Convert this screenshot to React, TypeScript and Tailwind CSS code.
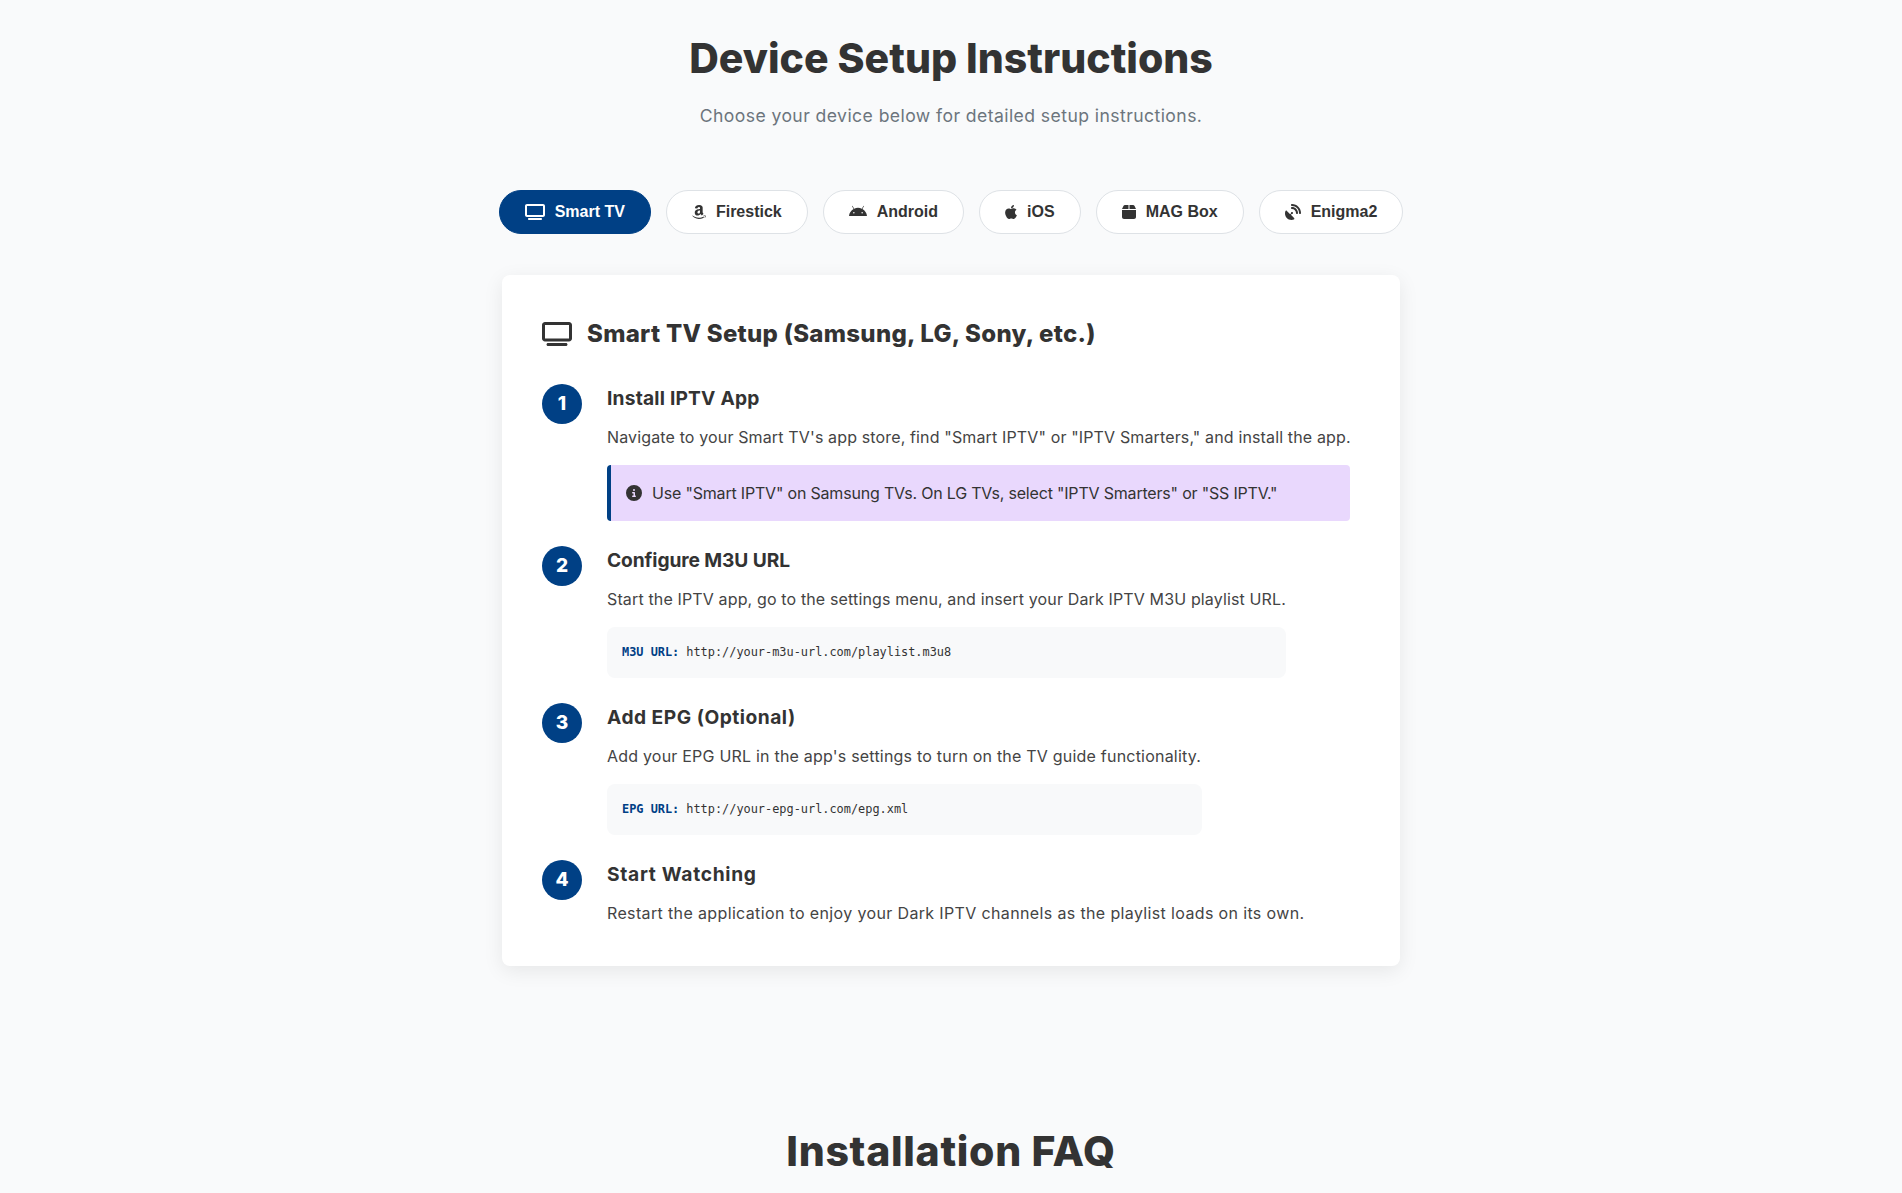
import { FaTv, FaAmazon, FaAndroid, FaApple, FaBox, FaSatelliteDish, FaCircleInfo } from "react-icons/fa6";
import type { ReactNode } from "react";

const tabs = [
  { label: "Smart TV", icon: <FaTv className="w-5 h-4" />, active: true },
  { label: "Firestick", icon: <FaAmazon className="w-[14px] h-4" /> },
  { label: "Android", icon: <FaAndroid className="w-[18px] h-4" /> },
  { label: "iOS", icon: <FaApple className="w-3 h-4" /> },
  { label: "MAG Box", icon: <FaBox className="w-[14px] h-4" /> },
  { label: "Enigma2", icon: <FaSatelliteDish className="w-4 h-4" /> },
];

function Step({ n, title, text, children, className, titleClass, textClass }: { n: number; title: string; text: string; children?: ReactNode; className?: string; titleClass: string; textClass: string }) {
  return (
    <div className={`flex gap-[25px] ${className ?? ""}`}>
      <div className="w-10 h-10 shrink-0 rounded-full bg-[#004085] text-white flex items-center justify-center text-[19px] font-extrabold">{n}</div>
      <div className="min-w-0 pt-[1px]">
        <h3 className={`text-[19.2px] leading-[26px] font-bold text-[#333] ${titleClass}`}>{title}</h3>
        <p className={`mt-[13px] text-[16px] leading-[26px] text-[#444] ${textClass}`}>{text}</p>
        {children}
      </div>
    </div>
  );
}

function Code({ label, url, width }: { label: string; url: string; width: string }) {
  return (
    <div className={`mt-[15px] h-[51px] ${width} rounded-lg bg-[#f8f9fa] px-[15px] flex items-center text-[11.9px] text-[#333] font-['DejaVu_Sans_Mono',monospace]`}>
      <span className="font-bold text-[#004085]">{label}</span>
      <span className="ml-[7px]">{url}</span>
    </div>
  );
}

export default function App() {
  return (
    <div className="h-[1193px] overflow-hidden bg-[#f9fafb] font-['Inter',sans-serif] text-[#333]">
      <h1 className="pt-[34px] text-center text-[41px] leading-[48px] font-extrabold text-[#333]">Device Setup Instructions</h1>
      <p className="mt-[20px] text-center text-[17.6px] leading-[28px] tracking-[0.42px] text-[#6c757d]">Choose your device below for detailed setup instructions.</p>

      <div className="mt-[60px] flex justify-center gap-[15px]">
        {tabs.map((t) => (
          <button
            key={t.label}
            className={`h-[44px] px-[25px] rounded-full flex items-center gap-[10px] text-[16px] font-bold font-['Liberation_Sans',sans-serif] border ${
              t.active ? "bg-[#004085] text-white border-[#004085]" : "bg-white text-[#333] border-[#dee2e6]"
            }`}
          >
            {t.icon}
            <span>{t.label}</span>
          </button>
        ))}
      </div>

      <div className="mt-[41px] mx-auto w-[898px] h-[691px] rounded-lg bg-white shadow-[0_5px_20px_rgba(0,0,0,0.08)] px-[40px] pt-[41px]">
        <h2 className="flex items-center gap-[15px] text-[24px] leading-[36px] font-extrabold tracking-[0.29px] text-[#333]">
          <FaTv className="w-[30px] h-6" />
          <span>Smart TV Setup (Samsung, LG, Sony, etc.)</span>
        </h2>
        <Step n={1} title="Install IPTV App" titleClass="tracking-[0.2px]" textClass="tracking-[0.14px]" text={`Navigate to your Smart TV's app store, find "Smart IPTV" or "IPTV Smarters," and install the app.`} className="mt-[32px]">
          <div className="mt-[15px] h-[56px] w-[743px] rounded border-l-4 border-[#004085] bg-[#e9d8fd] pl-[15px] flex items-center gap-[10px] text-[16px] tracking-[-0.19px] text-[#333]">
            <FaCircleInfo size={16} />
            <span>Use "Smart IPTV" on Samsung TVs. On LG TVs, select "IPTV Smarters" or "SS IPTV."</span>
          </div>
        </Step>
        <Step n={2} title="Configure M3U URL" titleClass="tracking-[-0.1px]" textClass="tracking-[0.14px]" text="Start the IPTV app, go to the settings menu, and insert your Dark IPTV M3U playlist URL." className="mt-[25px]">
          <Code label="M3U URL:" url="http://your-m3u-url.com/playlist.m3u8" width="w-[679px]" />
        </Step>
        <Step n={3} title="Add EPG (Optional)" titleClass="tracking-[0.5px]" textClass="tracking-[0.21px]" text="Add your EPG URL in the app's settings to turn on the TV guide functionality." className="mt-[25px]">
          <Code label="EPG URL:" url="http://your-epg-url.com/epg.xml" width="w-[595px]" />
        </Step>
        <Step n={4} title="Start Watching" titleClass="tracking-[0.7px]" textClass="tracking-[0.36px]" text="Restart the application to enjoy your Dark IPTV channels as the playlist loads on its own." className="mt-[25px]" />
      </div>

      <h2 className="mt-[161px] text-center text-[41px] leading-[48px] font-extrabold tracking-[0.7px] text-[#333]">Installation FAQ</h2>
    </div>
  );
}
